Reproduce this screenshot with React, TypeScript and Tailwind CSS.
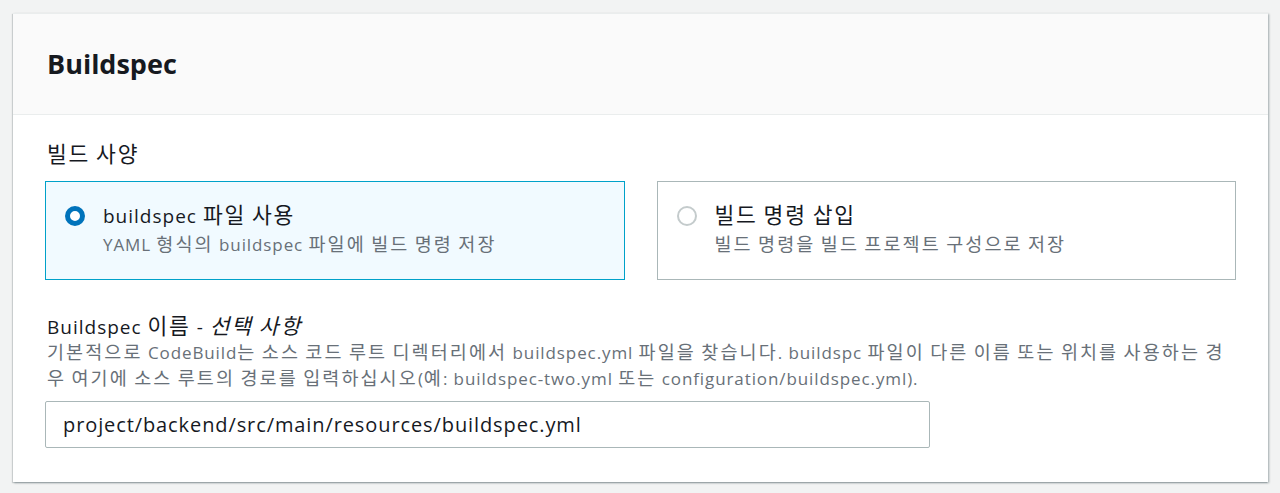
import { useState } from "react";

const font = { fontFamily: '"Open Sans", "Noto Sans CJK KR", sans-serif' };

// 한글 구간만 따로 감싸서 크기/자간을 맞춘다
function ko(text: string, cls: string) {
  return text.split(/([\uAC00-\uD7A3]+)/).map((part, i) =>
    /[\uAC00-\uD7A3]/.test(part) ? (
      <span key={i} className={cls}>
        {part}
      </span>
    ) : (
      part
    )
  );
}

const titleKo = "text-[21.5px] tracking-[1.8px] leading-none";
const descKo = "text-[18.5px] tracking-[2.1px] leading-none";

interface TileProps {
  checked: boolean;
  title: string;
  desc: string;
  onSelect: () => void;
}

function RadioTile({ checked, title, desc, onSelect }: TileProps) {
  return (
    <div
      onClick={onSelect}
      className={`h-[99px] flex items-start pl-[19px] pt-[21px] cursor-pointer border ${
        checked ? "bg-[#f1faff] border-[#00a1c9]" : "bg-white border-[#aab7b8]"
      }`}
    >
      {checked ? (
        <span className="mt-[3px] w-5 h-5 rounded-full border-[5px] border-[#0073bb] bg-white shrink-0" />
      ) : (
        <span className="mt-[3px] w-5 h-5 rounded-full border-2 border-[#c4cbcc] bg-white shrink-0" />
      )}
      <div className="ml-[18px]">
        <p className="text-[19px] tracking-[1px] leading-[26px] text-[#16191f]">{ko(title, titleKo)}</p>
        <p className="text-[17px] tracking-[0.9px] leading-[26px] text-[#687078] mt-[3px]">{ko(desc, descKo)}</p>
      </div>
    </div>
  );
}

export default function App() {
  const [mode, setMode] = useState("file");
  const [path, setPath] = useState("project/backend/src/main/resources/buildspec.yml");

  return (
    <div className="min-h-[493px] bg-[#f2f3f3] pt-[13px] pl-[13px]" style={font}>
      <div className="w-[1255px] bg-white border-t border-[#eaeded] shadow-[1px_1px_2px_rgba(0,28,36,0.35),-1px_1px_1px_rgba(0,28,36,0.15)]">
        {/* 헤더 */}
        <div className="h-[101px] bg-[#fafafa] border-b border-[#eaeded] flex items-center pl-[34px]">
          <h2 className="text-[27px] font-bold text-[#16191f] leading-none pb-[2px]">Buildspec</h2>
        </div>

        <div className="px-[32px] pt-[27px] pb-[34px]">
          <p className="text-[19px] tracking-[1px] leading-[26px] text-[#16191f] pl-[2px]">{ko("빌드 사양", titleKo)}</p>
          <div className="grid grid-cols-2 gap-8 mt-[13px]">
            <RadioTile
              checked={mode === "file"}
              title="buildspec 파일 사용"
              desc="YAML 형식의 buildspec 파일에 빌드 명령 저장"
              onSelect={() => setMode("file")}
            />
            <RadioTile
              checked={mode === "inline"}
              title="빌드 명령 삽입"
              desc="빌드 명령을 빌드 프로젝트 구성으로 저장"
              onSelect={() => setMode("inline")}
            />
          </div>

          <div className="mt-[34px] pl-[2px]">
            <p className="text-[19px] tracking-[1px] leading-[26px] text-[#16191f]">
              {ko("Buildspec 이름 - ", titleKo)}
              <i>{ko("선택 사항", titleKo)}</i>
            </p>
            <p className="text-[17px] tracking-[0.9px] leading-[26px] text-[#687078]">
              {ko(
                "기본적으로 CodeBuild는 소스 코드 루트 디렉터리에서 buildspec.yml 파일을 찾습니다. buildspc 파일이 다른 이름 또는 위치를 사용하는 경",
                descKo
              )}
              <br />
              {ko(
                "우 여기에 소스 루트의 경로를 입력하십시오(예: buildspec-two.yml 또는 configuration/buildspec.yml).",
                descKo
              )}
            </p>
          </div>
          <input
            value={path}
            onChange={(e) => setPath(e.target.value)}
            className="mt-[9px] w-[885px] h-[47px] border border-[#aab7b8] rounded-[2px] px-[17px] text-[20px] tracking-[0.9px] text-[#16191f] outline-none"
            style={font}
          />
        </div>
      </div>
    </div>
  );
}
